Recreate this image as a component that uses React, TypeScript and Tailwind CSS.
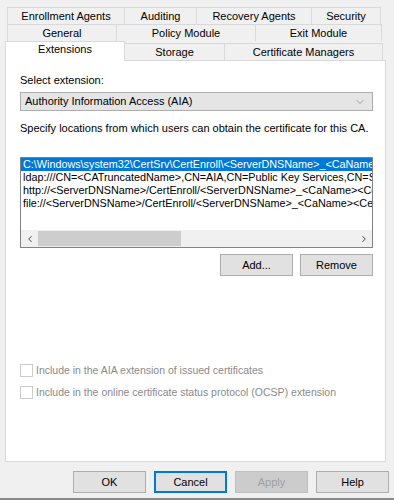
import { ChevronDown, ChevronLeft, ChevronRight } from 'lucide-react';

const font = "font-['Liberation_Sans',Arial,sans-serif]";

const row1 = [
  { label: 'Enrollment Agents', w: 118 },
  { label: 'Auditing', w: 73 },
  { label: 'Recovery Agents', w: 116 },
  { label: 'Security', w: 70 },
];
const row2 = [
  { label: 'General', w: 110 },
  { label: 'Policy Module', w: 140 },
  { label: 'Exit Module', w: 127 },
];
const row3 = [
  { label: 'Storage', w: 101 },
  { label: 'Certificate Managers', w: 159 },
];

const paths = [
  'C:\\Windows\\system32\\CertSrv\\CertEnroll\\<ServerDNSName>_<CaName><CertificateName>.crt',
  'ldap:///CN=<CATruncatedName>,CN=AIA,CN=Public Key Services,CN=Services,<ConfigurationContainer>',
  'http://<ServerDNSName>/CertEnroll/<ServerDNSName>_<CaName><CertificateName>.crt',
  'file://<ServerDNSName>/CertEnroll/<ServerDNSName>_<CaName><CertificateName>.crt',
];

function Tab({ label, w }: { label: string; w: number }) {
  return (
    <div
      style={{ width: w }}
      className="h-[17px] -ml-px first:ml-0 border border-b-0 border-[#d9d9d9] bg-[#f0f0f0] flex items-center justify-center text-[11px] text-black leading-none"
    >
      {label}
    </div>
  );
}

function Button({ children, variant }: { children: React.ReactNode; variant?: 'focus' | 'disabled' }) {
  const cls =
    variant === 'focus'
      ? 'border-2 border-[#0078d7] bg-[#e1e1e1] text-black'
      : variant === 'disabled'
      ? 'border border-[#bfbfbf] bg-[#cccccc] text-[#a0a0a0]'
      : 'border border-[#adadad] bg-[#e1e1e1] text-black';
  return (
    <div className={`w-[73px] h-[22px] flex items-center justify-center text-[11px] leading-none ${cls}`}>
      {children}
    </div>
  );
}

function Checkbox({ label }: { label: string }) {
  return (
    <div className="flex items-center h-[14px]">
      <div className="w-[13px] h-[13px] border border-[#cccccc] bg-white" />
      <span className="ml-[3px] text-[10.5px] text-[#8a8a8a] leading-none">{label}</span>
    </div>
  );
}

export default function App() {
  return (
    <div className={`w-[394px] h-[500px] bg-[#f0f0f0] flex flex-col overflow-hidden ${font}`}>
      {/* tab rows */}
      <div className="pt-[7px] pl-[7px]">
        <div className="flex">
          {row1.map(t => (
            <Tab key={t.label} {...t} />
          ))}
        </div>
        <div className="flex">
          {row2.map(t => (
            <Tab key={t.label} {...t} />
          ))}
        </div>
        <div className="flex items-end -ml-[2px] h-[19px]">
          <div className="w-[120px] h-[20px] -mb-px z-10 border border-b-0 border-[#d9d9d9] bg-white flex items-start justify-center pt-[2px] text-[11px] leading-none">
            Extensions
          </div>
          <div className="flex h-[17px] -ml-px">
            {row3.map(t => (
              <Tab key={t.label} {...t} />
            ))}
          </div>
        </div>
      </div>

      {/* panel */}
      <div className="ml-[5px] w-[381px] h-[402px] border border-[#d9d9d9] bg-white flex flex-col pl-[14px] pr-[12px] text-[11px] leading-none text-black">
        <div className="mt-[14px]">Select extension:</div>
        <div className="mt-[6px] h-[19px] border border-[#adadad] bg-[#e5e5e5] flex items-center justify-between pl-[4px] pr-[6px]">
          <span>Authority Information Access (AIA)</span>
          <ChevronDown size={12} strokeWidth={1.2} className="text-[#707070]" />
        </div>
        <div className="mt-[12px]">Specify locations from which users can obtain the certificate for this CA.</div>

        <div className="mt-[23px] h-[91px] border border-[#828282] flex flex-col overflow-hidden">
          <div className="flex-1 overflow-hidden text-[10.8px]">
            {paths.map((p, i) => (
              <div
                key={p}
                className={`h-[13px] leading-[13px] pl-[2px] whitespace-nowrap overflow-hidden ${i === 0 ? 'bg-[#0078d7] text-white' : 'text-black'}`}
              >
                {p}
              </div>
            ))}
          </div>
          <div className="h-[17px] bg-[#f0f0f0] flex items-center">
            <div className="w-[17px] flex justify-center text-[#606060]">
              <ChevronLeft size={10} strokeWidth={2.5} />
            </div>
            <div className="flex-1 h-full flex items-center">
              <div className="w-[143px] h-[15px] bg-[#cdcdcd]" />
            </div>
            <div className="w-[17px] flex justify-center text-[#606060]">
              <ChevronRight size={10} strokeWidth={2.5} />
            </div>
          </div>
        </div>

        <div className="mt-[6px] flex justify-end gap-[7px]">
          <Button>Add...</Button>
          <Button>Remove</Button>
        </div>

        <div className="mt-[87px] flex flex-col gap-[8px]">
          <Checkbox label="Include in the AIA extension of issued certificates" />
          <Checkbox label="Include in the online certificate status protocol (OCSP) extension" />
        </div>
      </div>

      {/* dialog buttons */}
      <div className="mt-[9px] pl-[73px] flex gap-[8px]">
        <Button>OK</Button>
        <Button variant="focus">Cancel</Button>
        <Button variant="disabled">Apply</Button>
        <Button>Help</Button>
      </div>
      <div className="mt-auto h-[2px] bg-[#8a8a8a]" />
    </div>
  );
}
